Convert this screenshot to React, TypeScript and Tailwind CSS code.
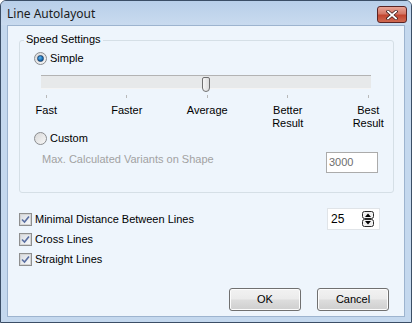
function Radio({ checked }: { checked?: boolean }) {
  return (
    <span className="w-[13px] h-[13px] rounded-full border border-[#8a8c8f] bg-gradient-to-br from-[#d8d8d8] to-[#f8f8f8] flex items-center justify-center shrink-0">
      {checked && <span className="w-[7px] h-[7px] rounded-full bg-[radial-gradient(circle_at_40%_35%,#5bb6f0,#0d5fa8_70%)] border border-[#21466f]" />}
    </span>
  )
}

function Check() {
  return (
    <span className="w-[13px] h-[13px] border border-[#8e8f8f] bg-[#f4f4f4] flex items-center justify-center shrink-0">
      <span className="w-[11px] h-[11px] border border-[#d4d4d4] bg-gradient-to-br from-[#d9dde2] to-[#f8f9fa] flex items-center justify-center">
        <svg width="9" height="9" viewBox="0 0 9 9">
          <path d="M1 4.5 L3.5 7 L8 1.5" stroke="#5a6ea0" strokeWidth="1.6" fill="none" />
        </svg>
      </span>
    </span>
  )
}

function Button({ label }: { label: string }) {
  return (
    <button className="w-[72px] h-[23px] rounded-[3px] border border-[#707070] bg-[linear-gradient(#f2f2f2_0%,#ebebeb_48%,#dddddd_52%,#cfcfcf_100%)] text-[11px] text-black leading-none shadow-[inset_0_0_0_1px_#fcfcfc]">
      {label}
    </button>
  )
}

export default function App() {
  const ticks = [
    { top: 'Fast', bottom: '' },
    { top: 'Faster', bottom: '' },
    { top: 'Average', bottom: '' },
    { top: 'Better', bottom: 'Result' },
    { top: 'Best', bottom: 'Result' },
  ]
  return (
    <div className="w-[412px] h-[323px] flex flex-col bg-[#c4d8ee] border border-[#3b4e66] rounded-t-[6px] overflow-hidden font-['Liberation_Sans',Arial,sans-serif] text-[11px] text-black">
      {/* title bar */}
      <div className="h-[24px] flex items-center justify-between pl-[6px] pr-[4px] bg-gradient-to-b from-[#b8cfe9] to-[#c9dbef] shrink-0">
        <span className="font-['Noto_Sans',sans-serif] text-[12px] text-[#1b1b1b] leading-none pt-[2px]">Line Autolayout</span>
        <span className="w-[30px] h-[17px] mt-[3px] rounded-[3px] border border-[#5a2424] bg-[linear-gradient(#e8a496_0%,#d47766_45%,#c2452f_55%,#cf6a52_100%)] flex items-center justify-center">
          <svg width="12" height="10" viewBox="0 0 12 10">
            <path d="M2 1.5 L10 8.5 M10 1.5 L2 8.5" stroke="#3a1a1a" strokeWidth="3.2" strokeLinecap="square" />
            <path d="M2 1.5 L10 8.5 M10 1.5 L2 8.5" stroke="#ffffff" strokeWidth="1.8" strokeLinecap="square" />
          </svg>
        </span>
      </div>

      {/* client area */}
      <div className="mx-[6px] h-[292px] bg-[#eef5fc] border border-[#9db4cf] flex flex-col">
        {/* speed settings group */}
        <div className="relative mt-[14px] ml-[11px] w-[375px] h-[153px] border border-[#d5dfe6] rounded-[3px] flex flex-col">
          <span className="absolute left-[4px] top-[-8px] px-[2px] bg-[#eef5fc] leading-[13px]">Speed Settings</span>

          <div className="flex items-center gap-[3px] pl-[14px] pt-[11px]">
            <Radio checked />
            <span className="leading-[13px]">Simple</span>
          </div>

          {/* slider */}
          <div className="relative ml-[21px] mt-[10px] w-[330px] h-[14px] border-t border-[#b3b3b3] border-b border-b-[#f4f4f4] bg-[#e7e9ea]">
            <span className="absolute left-[161px] top-[1px] w-[8px] h-[15px] rounded-t-[2px] rounded-b-[4px] border border-[#707070] bg-gradient-to-r from-[#f6f6f6] to-[#dcdcdc]" />
          </div>

          <div className="flex ml-[-14px] mt-[6px]">
            {ticks.map((t) => (
              <div key={t.top} className="w-[80.5px] shrink-0 flex flex-col items-center">
                <span className="w-px h-[3px] bg-[#b9b9b9]" />
                <span className="mt-[6px] leading-[13px] text-center">
                  {t.top}
                  {t.bottom && <br />}
                  {t.bottom}
                </span>
              </div>
            ))}
          </div>

          <div className="flex items-center gap-[3px] pl-[14px] mt-[2px]">
            <Radio />
            <span className="leading-[13px]">Custom</span>
          </div>

          <div className="flex items-start justify-between pl-[22px] pr-[15px] mt-[7px]">
            <span className="mt-[1px] leading-[13px] text-[#a2a2a2]">Max. Calculated Variants on Shape</span>
            <span className="w-[52px] h-[21px] border border-[#ababab] bg-white text-[#6d6d6d] flex items-center pl-[2px]">3000</span>
          </div>
        </div>

        {/* checkboxes */}
        <div className="ml-[11px] mt-[15px] w-[361px] h-[22px] flex items-center justify-between">
          <div className="flex items-center gap-[3px]">
            <Check />
            <span className="leading-[13px]">Minimal Distance Between Lines</span>
          </div>
          <div className="w-[53px] h-[22px] border border-[#e0e4e8] bg-white flex items-center justify-between pl-[3px] pr-[5px]">
            <span className="text-[12px]">25</span>
            <svg width="12" height="16" viewBox="0 0 12 16">
              <rect x="0.5" y="0.5" width="11" height="7" rx="2" fill="#f0f0f0" stroke="#2b2b2b" />
              <rect x="0.5" y="8.5" width="11" height="7" rx="2" fill="#f0f0f0" stroke="#2b2b2b" />
              <path d="M3 6 L6 2.5 L9 6 Z" fill="#000" />
              <path d="M3 10 L6 13.5 L9 10 Z" fill="#000" />
            </svg>
          </div>
        </div>
        <div className="ml-[11px] mt-[3px] flex items-center gap-[3px]">
          <Check />
          <span className="leading-[13px]">Cross Lines</span>
        </div>
        <div className="ml-[11px] mt-[7px] flex items-center gap-[3px]">
          <Check />
          <span className="leading-[13px]">Straight Lines</span>
        </div>

        <div className="mt-[22px] flex justify-end gap-[16px] pr-[15px]">
          <Button label="OK" />
          <Button label="Cancel" />
        </div>
      </div>
    </div>
  )
}
